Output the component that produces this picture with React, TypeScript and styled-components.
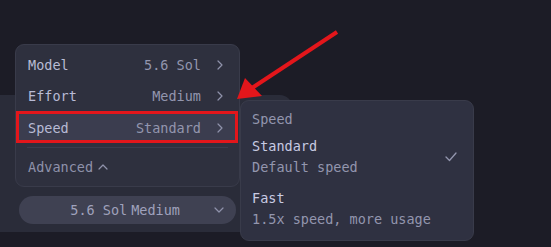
import React from "react";
import styled, { createGlobalStyle } from "styled-components";

const Global = createGlobalStyle`
  html, body { margin: 0; padding: 0; background: #1c1c26; }
  body { font-family: "DejaVu Sans Mono", "Liberation Mono", monospace; }
`;

const Stage = styled.div`
  position: relative;
  width: 551px;
  height: 247px;
  overflow: hidden;
  background: #1c1c26;
  padding-top: 95px;
  box-sizing: border-box;
`;

const Composer = styled.div`
  width: 292px;
  height: 137px;
  background: #2a2c39;
  border-radius: 0 12px 12px 0;
  padding: 101px 0 0 19px;
  box-sizing: border-box;
`;

const Pill = styled.div`
  width: 217px;
  height: 28px;
  border-radius: 14px;
  background: #3f4152;
  display: flex;
  align-items: center;
  justify-content: flex-end;
  padding-right: 12px;
  box-sizing: border-box;
  gap: 4px;
  font-size: 13.5px;
  color: #9fa2bc;
`;

const PillValue = styled.span<{ $gap?: number }>`
  margin-right: ${(p) => p.$gap ?? 0}px;
`;

const Menu = styled.div`
  position: absolute;
  left: 15px;
  top: 44px;
  width: 225px;
  height: 143px;
  box-sizing: border-box;
  background: #2e303e;
  border: 1px solid #393b4a;
  border-radius: 9px;
  padding: 4px 3px 0 3px;
  display: flex;
  flex-direction: column;
  font-size: 13.5px;
  & > * { flex-shrink: 0; }
`;

const Row = styled.div<{ $active?: boolean }>`
  position: relative;
  height: 31px;
  display: flex;
  align-items: center;
  padding: 0 12px 0 9px;
  border-radius: 3px;
  background: ${(p) => (p.$active ? "#3b3d4f" : "transparent")};
  margin-top: ${(p) => (p.$active ? "1px" : "0")};
`;

const Label = styled.span`
  color: #b8bbd5;
  flex: 1;
`;

const Value = styled.span`
  color: #9396ae;
  margin-right: 15px;
`;

const Highlight = styled.div`
  position: absolute;
  left: -3px;
  right: -2px;
  top: -1px;
  bottom: 0;
  border: 3px solid #e3161b;
  pointer-events: none;
`;

const Divider = styled.div`
  height: 1px;
  background: #3a3c4c;
  margin: 4px 8px 0 8px;
`;

const Advanced = styled.div`
  display: flex;
  align-items: center;
  gap: 5px;
  padding: 0 9px;
  height: 34px;
  margin-top: 2px;
  color: #8f92ab;
`;

const Sub = styled.div`
  position: absolute;
  left: 240px;
  top: 100px;
  width: 234px;
  height: 141px;
  box-sizing: border-box;
  background: #2f3141;
  border: 1px solid #393b4a;
  border-radius: 9px;
  padding: 7px 11px;
  font-size: 13.5px;
`;

const SubHeader = styled.div`
  color: #9396ae;
  height: 22px;
  display: flex;
  align-items: center;
  margin-bottom: 6px;
`;

const Option = styled.div`
  display: flex;
  align-items: center;
  justify-content: space-between;
  margin-bottom: 11px;
`;

const OptText = styled.div`
  display: flex;
  flex-direction: column;
  gap: 1px;
`;

const OptTitle = styled.span`
  color: #c8cbe3;
  line-height: 20px;
`;

const OptDesc = styled.span`
  color: #9396ae;
  line-height: 20px;
`;

const Check = styled.svg`
  margin-right: 5px;
`;

const Arrow = styled.svg`
  position: absolute;
  left: 0;
  top: 0;
  pointer-events: none;
`;

const Chevron = ({ dir }: { dir: "right" | "down" | "up" }) => {
  const d =
    dir === "right"
      ? "M2 1 L6 5 L2 9"
      : dir === "down"
      ? "M1 2 L5 6 L9 2"
      : "M1 6 L5 2 L9 6";
  const w = dir === "right" ? 8 : 10;
  const h = dir === "right" ? 10 : 8;
  return (
    <svg width={w} height={h} viewBox={`0 0 ${w} ${h}`}>
      <path d={d} fill="none" stroke="#8f92ab" strokeWidth="1.2" strokeLinecap="round" strokeLinejoin="round" />
    </svg>
  );
};

export default function App() {
  return (
    <>
      <Global />
      <Stage>
        <Composer>
          <Pill>
            <PillValue>5.6 Sol</PillValue>
            <PillValue $gap={30}>Medium</PillValue>
            <Chevron dir="down" />
          </Pill>
        </Composer>

        <Menu>
          <Row>
            <Label>Model</Label>
            <Value>5.6 Sol</Value>
            <Chevron dir="right" />
          </Row>
          <Row>
            <Label>Effort</Label>
            <Value>Medium</Value>
            <Chevron dir="right" />
          </Row>
          <Row $active>
            <Label>Speed</Label>
            <Value>Standard</Value>
            <Chevron dir="right" />
            <Highlight />
          </Row>
          <Divider />
          <Advanced>
            Advanced
            <Chevron dir="up" />
          </Advanced>
        </Menu>

        <Sub>
          <SubHeader>Speed</SubHeader>
          <Option>
            <OptText>
              <OptTitle>Standard</OptTitle>
              <OptDesc>Default speed</OptDesc>
            </OptText>
            <Check width="12" height="10" viewBox="0 0 12 10">
              <path d="M1 5 L4.5 8.5 L11 1" fill="none" stroke="#9396ae" strokeWidth="1.3" strokeLinecap="round" strokeLinejoin="round" />
            </Check>
          </Option>
          <Option>
            <OptText>
              <OptTitle>Fast</OptTitle>
              <OptDesc>1.5x speed, more usage</OptDesc>
            </OptText>
          </Option>
        </Sub>

        <Arrow width="551" height="247" viewBox="0 0 551 247">
          <line x1="337" y1="32" x2="252" y2="88" stroke="#e3161b" strokeWidth="4" strokeLinecap="butt" />
          <polygon points="237,99 245,78 262,96" fill="#e3161b" />
        </Arrow>
      </Stage>
    </>
  );
}
